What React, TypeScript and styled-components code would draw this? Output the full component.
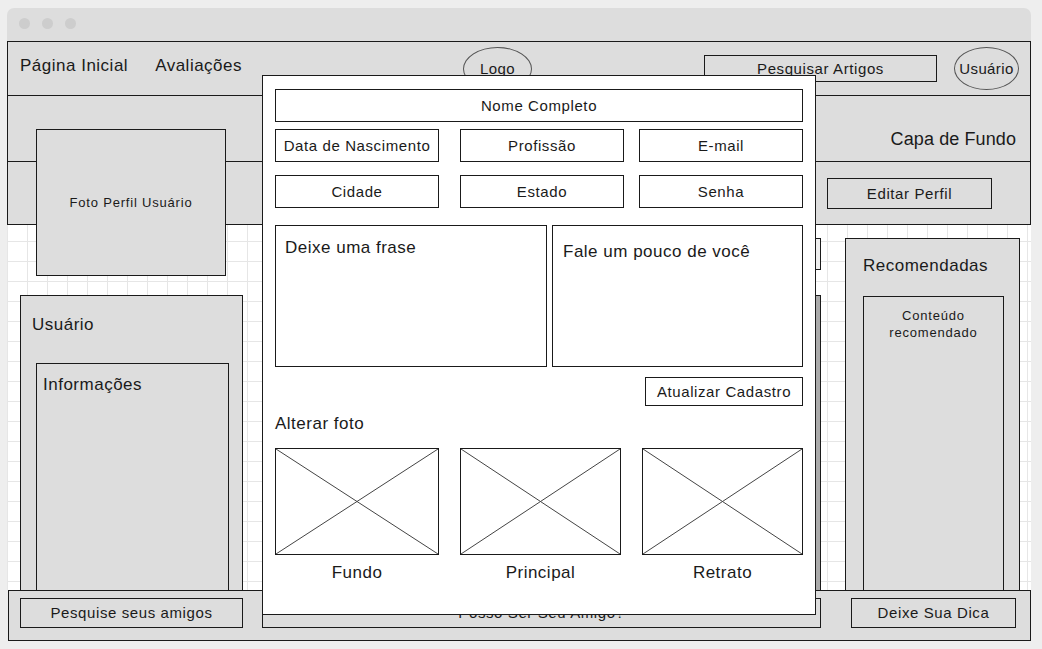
import React from 'react';
import styled, { createGlobalStyle } from 'styled-components';

const GlobalStyle = createGlobalStyle`
  * { box-sizing: border-box; }
  body {
    margin: 0;
    background: #eeeeee;
    font-family: "Liberation Sans", Arial, sans-serif;
    color: #1a1a1a;
  }
`;

const Window = styled.div`
  position: relative;
  display: flex;
  flex-direction: column;
  width: 1024px;
  height: 633px;
  margin: 8px 0 0 7px;
`;

const TitleBar = styled.div`
  display: flex;
  align-items: center;
  gap: 12px;
  height: 33px;
  padding: 0 0 2px 12px;
  background: #dddddd;
  border-radius: 7px 7px 0 0;
`;

const Dot = styled.span`
  width: 11px;
  height: 11px;
  border-radius: 50%;
  background: #cdcdcd;
`;

const Header = styled.div`
  display: flex;
  align-items: center;
  height: 54px;
  padding: 0 11px 0 12px;
  background: #dddddd;
  border: 1px solid #1a1a1a;
  border-bottom: none;
`;

const NavGroup = styled.div`
  display: flex;
  gap: 27px;
  width: 443px;
  padding-bottom: 6px;
`;

const NavLink = styled.span`
  font-size: 17px;
  letter-spacing: 0.5px;
`;

const Ellipse = styled.div<{ $w: number; $h: number }>`
  display: flex;
  align-items: center;
  justify-content: center;
  width: ${p => p.$w}px;
  height: ${p => p.$h}px;
  border: 1px solid #555;
  border-radius: 50%;
  font-size: 15px;
  letter-spacing: 0.4px;
  flex-shrink: 0;
`;

const SearchBox = styled.div`
  display: flex;
  align-items: center;
  justify-content: center;
  width: 233px;
  height: 27px;
  margin: 0 17px 0 172px;
  border: 1px solid #1a1a1a;
  font-size: 15px;
  letter-spacing: 0.6px;
`;

const Cover = styled.div`
  display: flex;
  justify-content: flex-end;
  align-items: flex-end;
  height: 66px;
  padding: 0 14px 11px;
  background: #dddddd;
  border: 1px solid #1a1a1a;
  border-bottom: none;
  font-size: 18px;
  letter-spacing: 0.1px;
`;

const Strip = styled.div`
  display: flex;
  justify-content: flex-end;
  align-items: center;
  height: 64px;
  padding-right: 38px;
  background: #dddddd;
  border: 1px solid #1a1a1a;
`;

const Button = styled.div<{ $w?: number; $h?: number }>`
  display: flex;
  align-items: center;
  justify-content: center;
  width: ${p => (p.$w ? `${p.$w}px` : 'auto')};
  height: ${p => p.$h ?? 30}px;
  border: 1px solid #1a1a1a;
  font-size: 15px;
  letter-spacing: 0.6px;
  flex-shrink: 0;
`;

const Content = styled.div`
  flex: 1;
  display: flex;
  padding: 0 11px 0 13px;
  background-color: #ffffff;
  background-image:
    linear-gradient(to right, #e6e6e6 1px, transparent 1px),
    linear-gradient(to bottom, #e6e6e6 1px, transparent 1px);
  background-size: 20px 20px;
  background-position: 0 16px;
`;

const Panel = styled.div<{ $w: number; $top: number; $gap: number; $pad: number }>`
  display: flex;
  flex-direction: column;
  flex-shrink: 0;
  width: ${p => p.$w}px;
  margin-top: ${p => p.$top}px;
  margin-left: ${p => p.$gap}px;
  padding-top: ${p => p.$pad}px;
  background: #dddddd;
  border: 1px solid #1a1a1a;
  border-bottom: none;
`;

const PanelTitle = styled.div<{ $left: number }>`
  padding-left: ${p => p.$left - 1}px;
  font-size: 17px;
  line-height: 20px;
  letter-spacing: 0.5px;
`;

const InnerBox = styled.div<{ $left: number; $right: number; $top: number }>`
  flex: 1;
  margin: ${p => p.$top}px ${p => p.$right - 1}px 0 ${p => p.$left - 1}px;
  background: #dddddd;
  border: 1px solid #1a1a1a;
  border-bottom: none;
`;

const InnerTitle = styled.div`
  padding: 11px 0 0 6px;
  font-size: 17px;
  line-height: 20px;
  letter-spacing: 0.5px;
`;

const SmallText = styled.div`
  padding-top: 10px;
  font-size: 13px;
  line-height: 17px;
  letter-spacing: 0.8px;
  text-align: center;
`;

const MiddleColumn = styled.div`
  display: flex;
  flex-direction: column;
  flex-shrink: 0;
  width: 559px;
  margin-left: 19px;
  padding-top: 13px;
`;

const PostBox = styled.div`
  height: 32px;
  background: #eeeeee;
  border: 1px solid #1a1a1a;
`;

const Feed = styled.div`
  flex: 1;
  margin-top: 25px;
  background: #aaaaaa;
  border: 1px solid #1a1a1a;
  border-bottom: none;
`;

const BottomBar = styled.div`
  display: flex;
  align-items: center;
  height: 51px;
  padding: 0 0 6px 11px;
  margin-left: 1px;
  background: #dddddd;
  border: 1px solid #1a1a1a;
`;

const BarButton = styled(Button)<{ $gap: number }>`
  margin-left: ${p => p.$gap}px;
  height: 30px;
`;

const ProfilePhoto = styled.div`
  position: absolute;
  left: 29px;
  top: 121px;
  width: 190px;
  height: 147px;
  display: flex;
  align-items: center;
  justify-content: center;
  background: #dddddd;
  border: 1px solid #1a1a1a;
  font-size: 13px;
  letter-spacing: 0.8px;
`;

const Modal = styled.div`
  position: absolute;
  left: 255px;
  top: 67px;
  width: 554px;
  height: 540px;
  display: flex;
  flex-direction: column;
  padding: 13px 12px 0;
  background: #ffffff;
  border: 1px solid #1a1a1a;
`;

const Field = styled.div<{ $h?: number; $w?: number }>`
  display: flex;
  align-items: center;
  justify-content: center;
  height: ${p => p.$h ?? 33}px;
  width: ${p => (p.$w ? `${p.$w}px` : 'auto')};
  border: 1px solid #1a1a1a;
  font-size: 15px;
  letter-spacing: 0.6px;
  white-space: nowrap;
`;

const FieldRow = styled.div<{ $top: number }>`
  display: grid;
  grid-template-columns: 185px 179px 164px;
  margin-top: ${p => p.$top}px;
`;

const TextAreas = styled.div`
  display: grid;
  grid-template-columns: 272px 251px;
  justify-content: space-between;
  margin-top: 17px;
`;

const TextArea = styled.div<{ $top: number; $left: number }>`
  height: 142px;
  padding: ${p => p.$top}px 8px 0 ${p => p.$left}px;
  border: 1px solid #1a1a1a;
  font-size: 17px;
  line-height: 20px;
  letter-spacing: 0.5px;
`;

const ActionRow = styled.div`
  display: flex;
  justify-content: flex-end;
  margin-top: 10px;
`;

const SectionLabel = styled.div`
  margin-top: 8px;
  font-size: 17px;
  line-height: 20px;
  letter-spacing: 0.5px;
`;

const Photos = styled.div`
  display: grid;
  grid-template-columns: 164px 161px 161px;
  justify-content: space-between;
  margin-top: 14px;
`;

const PhotoItem = styled.div`
  display: flex;
  flex-direction: column;
  align-items: center;
  gap: 8px;
`;

const Placeholder = styled.div`
  width: 100%;
  height: 107px;
  border: 1px solid #1a1a1a;
  svg { display: block; width: 100%; height: 100%; }
`;

const PhotoLabel = styled.div`
  font-size: 17px;
  line-height: 20px;
  letter-spacing: 0.5px;
`;

function PhotoSlot({ label }: { label: string }) {
  return (
    <PhotoItem>
      <Placeholder>
        <svg viewBox="0 0 100 100" preserveAspectRatio="none">
          <line x1="0" y1="0" x2="100" y2="100" stroke="#444" strokeWidth="1" vectorEffect="non-scaling-stroke" />
          <line x1="100" y1="0" x2="0" y2="100" stroke="#444" strokeWidth="1" vectorEffect="non-scaling-stroke" />
        </svg>
      </Placeholder>
      <PhotoLabel>{label}</PhotoLabel>
    </PhotoItem>
  );
}

export default function App() {
  return (
    <>
      <GlobalStyle />
      <Window>
        <TitleBar>
          <Dot />
          <Dot />
          <Dot />
        </TitleBar>
        <Header>
          <NavGroup>
            <NavLink>Página Inicial</NavLink>
            <NavLink>Avaliações</NavLink>
          </NavGroup>
          <Ellipse $w={69} $h={44}>Logo</Ellipse>
          <SearchBox>Pesquisar Artigos</SearchBox>
          <Ellipse $w={65} $h={43}>Usuário</Ellipse>
        </Header>
        <Cover>Capa de Fundo</Cover>
        <Strip>
          <Button $w={165} $h={31}>Editar Perfil</Button>
        </Strip>
        <Content>
          <Panel $w={223} $top={70} $gap={0} $pad={19}>
            <PanelTitle $left={12}>Usuário</PanelTitle>
            <InnerBox $left={16} $right={14} $top={28}>
              <InnerTitle>Informações</InnerTitle>
            </InnerBox>
          </Panel>
          <MiddleColumn>
            <PostBox />
            <Feed />
          </MiddleColumn>
          <Panel $w={175} $top={13} $gap={24} $pad={17}>
            <PanelTitle $left={18}>Recomendadas</PanelTitle>
            <InnerBox $left={18} $right={16} $top={20}>
              <SmallText>Conteúdo<br />recomendado</SmallText>
            </InnerBox>
          </Panel>
        </Content>
        <BottomBar>
          <BarButton $w={223} $gap={0}>Pesquise seus amigos</BarButton>
          <BarButton $w={559} $gap={19}>Posso Ser Seu Amigo?</BarButton>
          <BarButton $w={165} $gap={30}>Deixe Sua Dica</BarButton>
        </BottomBar>

        <ProfilePhoto>Foto Perfil Usuário</ProfilePhoto>

        <Modal>
          <Field>Nome Completo</Field>
          <FieldRow $top={7}>
            <Field $w={164}>Data de Nascimento</Field>
            <Field $w={164}>Profissão</Field>
            <Field $w={164}>E-mail</Field>
          </FieldRow>
          <FieldRow $top={13}>
            <Field $w={164}>Cidade</Field>
            <Field $w={164}>Estado</Field>
            <Field $w={164}>Senha</Field>
          </FieldRow>
          <TextAreas>
            <TextArea $top={12} $left={9}>Deixe uma frase</TextArea>
            <TextArea $top={16} $left={10}>Fale um pouco de você</TextArea>
          </TextAreas>
          <ActionRow>
            <Field $h={29} $w={158}>Atualizar Cadastro</Field>
          </ActionRow>
          <SectionLabel>Alterar foto</SectionLabel>
          <Photos>
            <PhotoSlot label="Fundo" />
            <PhotoSlot label="Principal" />
            <PhotoSlot label="Retrato" />
          </Photos>
        </Modal>
      </Window>
    </>
  );
}
